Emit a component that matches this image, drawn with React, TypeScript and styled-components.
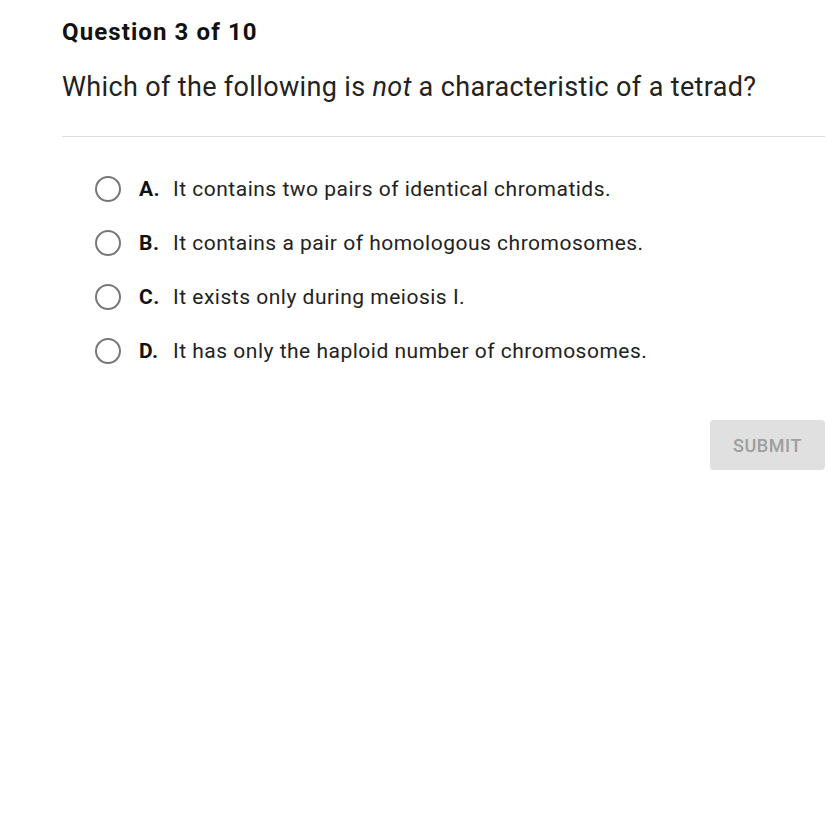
import styled, { createGlobalStyle } from 'styled-components';

const GlobalStyle = createGlobalStyle`
  html, body {
    margin: 0;
    padding: 0;
    background: #ffffff;
  }
  body {
    font-family: Roboto, "Liberation Sans", Arial, sans-serif;
    color: #212121;
  }
`;

const Page = styled.main`
  padding: 17px 3px 0 62px;
`;

const Counter = styled.h1`
  margin: 0;
  font-size: 24px;
  line-height: 30px;
  font-weight: 700;
  color: #111;
  letter-spacing: 1.1px;
`;

const Prompt = styled.p`
  margin: 23px 0 0;
  font-size: 27px;
  line-height: 34px;
  font-weight: 400;
  color: #222;
  letter-spacing: 0.35px;

  em {
    font-style: italic;
  }
`;

const Divider = styled.hr`
  margin: 32px 0 0;
  border: 0;
  border-top: 1px solid #dcdcdc;
`;

const Options = styled.div`
  display: flex;
  flex-direction: column;
  gap: 20px;
  padding: 35px 0 0 33px;
`;

const Option = styled.label`
  display: flex;
  align-items: center;
  height: 34px;
  cursor: pointer;
`;

const Radio = styled.span`
  width: 22px;
  height: 22px;
  border-radius: 50%;
  border: 2.5px solid #777;
  flex-shrink: 0;
`;

const Letter = styled.span`
  margin-left: 18px;
  width: 34px;
  font-size: 21px;
  font-weight: 700;
  color: #111;
  letter-spacing: 0.5px;
`;

const OptionText = styled.span`
  font-size: 21px;
  color: #222;
  letter-spacing: 0.5px;
`;

const Actions = styled.div`
  display: flex;
  justify-content: flex-end;
  margin-top: 52px;
`;

const SubmitButton = styled.button`
  width: 115px;
  height: 50px;
  border: 0;
  border-radius: 4px;
  background: #e0e0e0;
  color: #9e9e9e;
  font-family: Roboto, "Liberation Sans", Arial, sans-serif;
  font-size: 18px;
  font-weight: 500;
  letter-spacing: 0.6px;
`;

const answers = [
  { letter: 'A.', text: 'It contains two pairs of identical chromatids.' },
  { letter: 'B.', text: 'It contains a pair of homologous chromosomes.' },
  { letter: 'C.', text: 'It exists only during meiosis I.' },
  { letter: 'D.', text: 'It has only the haploid number of chromosomes.' },
];

export default function App() {
  return (
    <>
      <GlobalStyle />
      <Page>
        <Counter>Question 3 of 10</Counter>
        <Prompt>
          Which of the following is <em>not</em> a characteristic of a tetrad?
        </Prompt>
        <Divider />
        <Options>
          {answers.map((a) => (
            <Option key={a.letter}>
              <Radio />
              <Letter>{a.letter}</Letter>
              <OptionText>{a.text}</OptionText>
            </Option>
          ))}
        </Options>
        <Actions>
          <SubmitButton disabled>SUBMIT</SubmitButton>
        </Actions>
      </Page>
    </>
  );
}
